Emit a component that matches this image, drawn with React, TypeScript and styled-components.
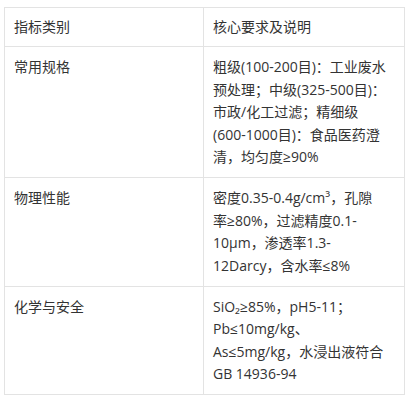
import React from "react";
import styled, { createGlobalStyle } from "styled-components";

const Global = createGlobalStyle`
  html, body { margin: 0; padding: 0; background: #ffffff; }
  body {
    font-family: "Open Sans", "Liberation Sans", "Noto Sans CJK SC", sans-serif;
    color: #333333;
  }
`;

const Page = styled.div`
  padding: 7px 4px 0 4px;
`;

const Table = styled.table`
  width: 400px;
  border-collapse: collapse;
  table-layout: fixed;
  font-size: 14px;
  line-height: 1.6;
`;

const HeadCell = styled.th`
  border: 1px solid #e3e3e3;
  padding: 8px 9px;
  text-align: left;
  font-weight: 400;
  vertical-align: top;
`;

const Cell = styled.td`
  border: 1px solid #e3e3e3;
  padding: 9px 9px;
  text-align: left;
  vertical-align: top;
`;

const Line = styled.span`
  display: block;
  white-space: nowrap;
`;

const rows: [string, string[]][] = [
  [
    "常用规格",
    [
      "粗级(100-200目)：工业废水",
      "预处理；中级(325-500目)：",
      "市政/化工过滤；精细级",
      "(600-1000目)：食品医药澄",
      "清，均匀度≥90%",
    ],
  ],
  [
    "物理性能",
    [
      "密度0.35-0.4g/cm³，孔隙",
      "率≥80%，过滤精度0.1-",
      "10μm，渗透率1.3-",
      "12Darcy，含水率≤8%",
    ],
  ],
  [
    "化学与安全",
    [
      "SiO₂≥85%，pH5-11；",
      "Pb≤10mg/kg、",
      "As≤5mg/kg，水浸出液符合",
      "GB 14936-94",
    ],
  ],
];

export default function App() {
  return (
    <>
      <Global />
      <Page>
        <Table>
          <colgroup>
            <col style={{ width: "199px" }} />
            <col style={{ width: "201px" }} />
          </colgroup>
          <thead>
            <tr>
              <HeadCell>指标类别</HeadCell>
              <HeadCell>核心要求及说明</HeadCell>
            </tr>
          </thead>
          <tbody>
            {rows.map(([k, lines]) => (
              <tr key={k}>
                <Cell>{k}</Cell>
                <Cell>
                  {lines.map((l) => (
                    <Line key={l}>{l}</Line>
                  ))}
                </Cell>
              </tr>
            ))}
          </tbody>
        </Table>
      </Page>
    </>
  );
}
